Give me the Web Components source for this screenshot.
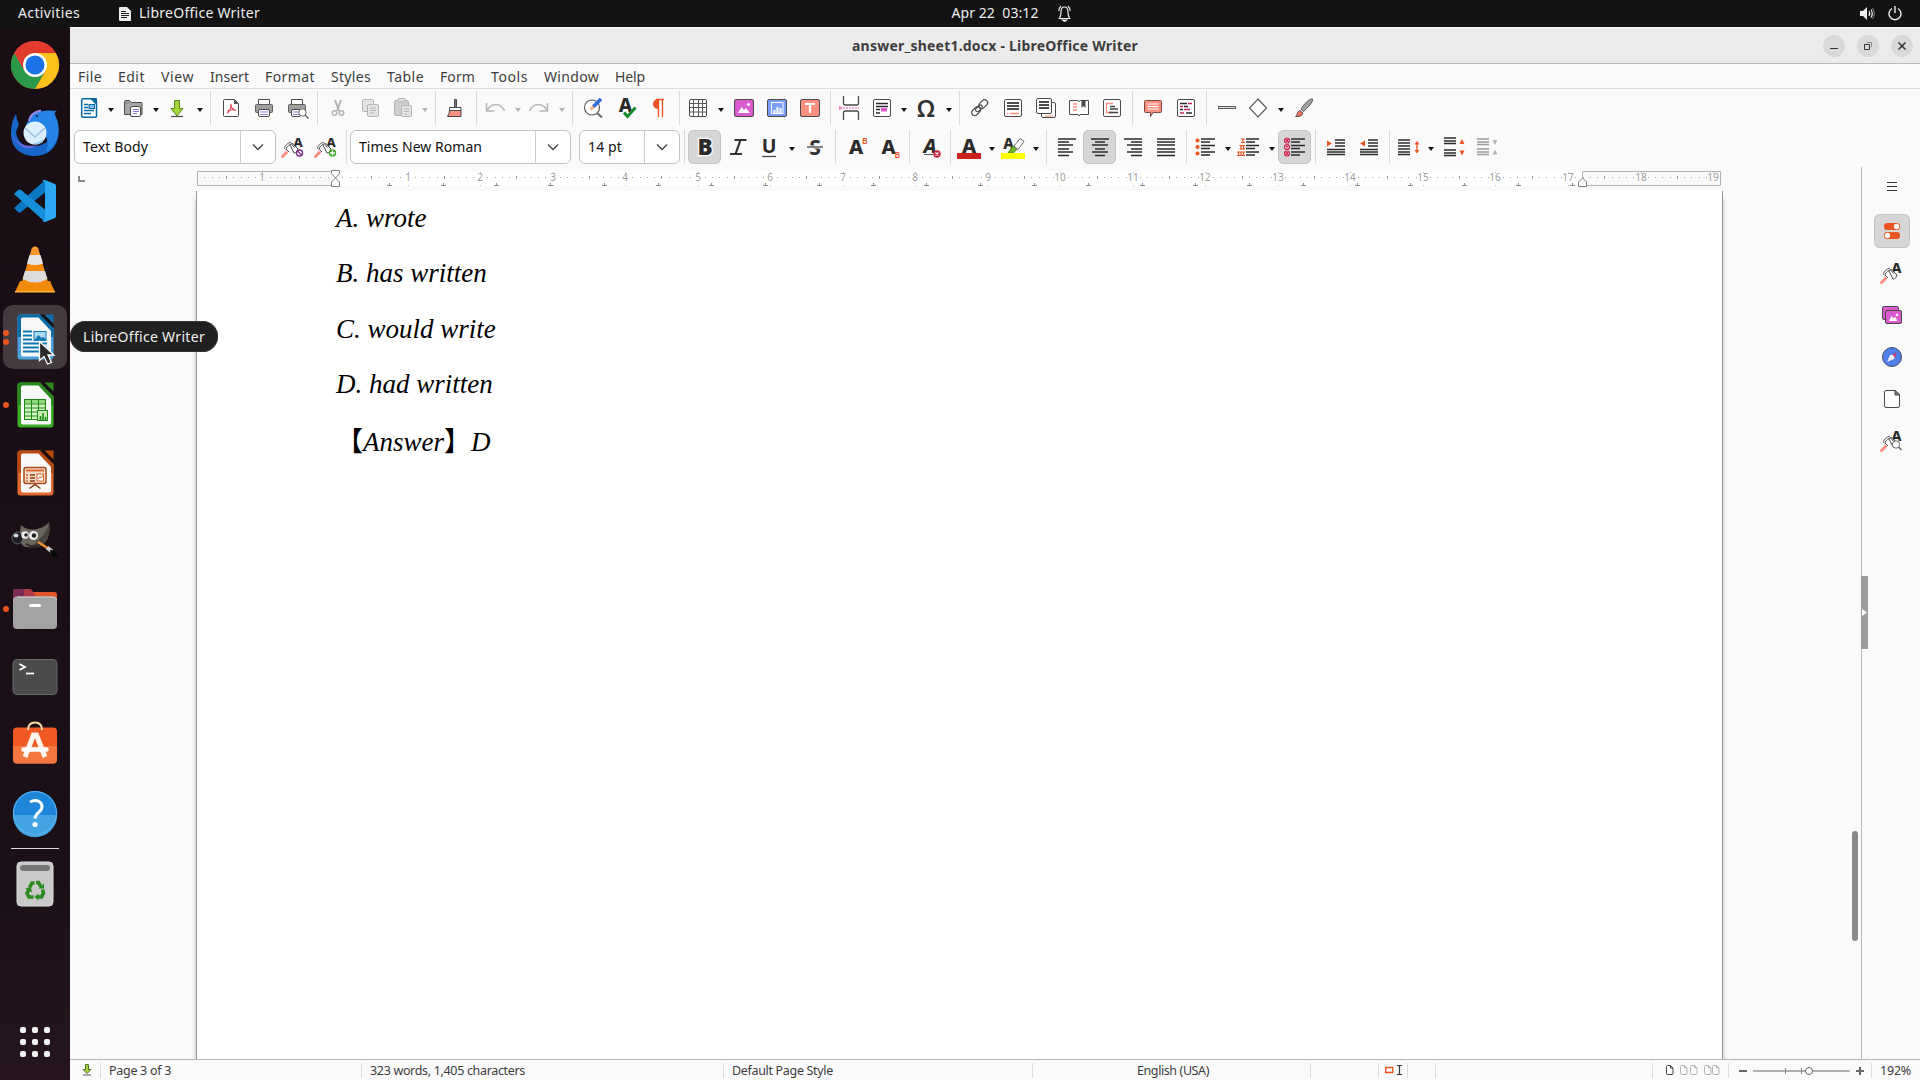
<!DOCTYPE html>
<html lang="en">
<head>
<meta charset="utf-8">
<title>answer_sheet1.docx - LibreOffice Writer</title>
<style>
  html, body { margin: 0; height: 100%; overflow: hidden; }
  body { font: 14px/20px "Noto Sans", sans-serif; color: #3d3d3d; background: #fafafa; }
</style>
</head>
<body>
<desktop-shell></desktop-shell>

<script>
const A = (x, y, size, fill = "#2b2b2b") =>
  `<text x="${x}" y="${y}" font-family="Noto Sans" font-weight="800" font-size="${size}" text-anchor="middle" fill="${fill}">A</text>`;
const B = (x, y) =>
  `<text x="${x}" y="${y}" font-family="Noto Sans" font-size="8.5" font-weight="600" fill="#e95420">B</text>`;
const lines = (list, color = "#2b2b2b", width = 1.5) =>
  `<path d="${list.map(([x, y, w]) => `M${x} ${y}h${w}`).join("")}" stroke="${color}" stroke-width="${width}" fill="none"/>`;
const page = (x, y, w, h, fill = "#fff", stroke = "#4a4a4a") =>
  `<rect x="${x}" y="${y}" width="${w}" height="${h}" rx="1.5" fill="${fill}" stroke="${stroke}"/>`;
const styleBrush = `
  <path d="M1.500 21.500l4-4" stroke="#fb9080" stroke-width="3" stroke-linecap="round"/>
  <path d="M3.500 13.500c0-3 4-6 6-6l4 5M5 14.500c0-2 2-4 4-5M5 14l3 3M9 10c2-2 3-2 4 0l4 4c-1 3-2 4-4 4z" fill="#fff" stroke="#4a4a4a"/>`;

// 24 x 24 glyphs for the toolbars and the sidebar
const ICONS = {
  new: `<path d="M6 2.800h9.500l4 4V20a1.300 1.300 0 0 1-1.300 1.300H6A1.300 1.300 0 0 1 4.700 20V4A1.300 1.300 0 0 1 6 2.800z" fill="#fff" stroke="#0369a3" stroke-width="1.500"/>
    <path d="M12.500 2H19q1 0 1 1v6.500z" fill="#0369a3"/>
    ${lines([[7, 8.500, 4], [7, 11.500, 4], [7, 14.500, 10], [7, 17.500, 7]], "#0369a3", 1.300)}
    <rect x="12" y="8.500" width="5.500" height="4" fill="#83beea" stroke="#0369a3"/>`,
  open: `<path d="M3.500 18.500v-13q0-1 1-1h4l2 2h9.500q1 0 1 1v11z" fill="#a7a7a7" stroke="#4a4a4a"/>
    <path d="M3.500 7h4l2-1.500" stroke="#777" fill="none"/>
    ${page(9.500, 10.500, 10, 10)}${lines([[12, 13.500, 6], [12, 15.500, 6], [12, 17.500, 4]], "#8a83d8", 1)}`,
  save: `<path d="M9.500 4.500h5v8H18l-6 7.500-6-7.500h3.500z" fill="#a3d63a" stroke="#58881a"/>${lines([[6, 20.500, 12]], "#4a4a4a", 1.200)}`,
  pdf: `<path d="M6 3.500h9.500l4 4V19.500a1 1 0 0 1-1 1H5.500a1 1 0 0 1-1-1v-15a1 1 0 0 1 1-1z" fill="#fff" stroke="#4a4a4a"/>
    <path d="M15 3.500v4.500h4.500z" fill="#555"/>
    <path d="M11.500 8c2 1-1 8-3.500 9M11.500 9c1 3 3 5 5.500 5.500M8.500 15c2-1 5-1.500 8-1" stroke="#e8344f" fill="none" stroke-width="1.100"/>`,
  print: `<path d="M6.500 9v-5.500h11V9" fill="#fff" stroke="#4a4a4a"/>
    <rect x="3.500" y="8.500" width="17" height="8" rx="1" fill="#a0a0a0" stroke="#5e5e5e"/>
    ${page(6.500, 13.500, 11, 7)}${lines([[8, 16, 8], [8, 18.500, 8]], "#8a83d8", 1)}`,
  preview: `<path d="M6.500 9v-5.500h11V9" fill="#fff" stroke="#4a4a4a"/>
    <rect x="3.500" y="8.500" width="17" height="8" rx="1" fill="#a0a0a0" stroke="#5e5e5e"/>
    ${page(6.500, 13.500, 9, 7)}${lines([[8, 16, 7], [8, 18.500, 6]], "#8a83d8", 1)}
    <circle cx="17.500" cy="16.500" r="3.700" fill="#fff" stroke="#6a6a6a"/><path d="M20 19l3.500 3.500" stroke="#6a6a6a" stroke-width="1.600"/>`,
  cut: `<g transform="translate(1)"><path d="M9 4l4 11M15 4l-4 11" stroke="#b5b5b5" stroke-width="2"/>
    <circle cx="8.500" cy="17" r="2.300" fill="none" stroke="#b5b5b5" stroke-width="1.500"/><circle cx="15.500" cy="17" r="2.300" fill="none" stroke="#b5b5b5" stroke-width="1.500"/></g>`,
  copy: `<g transform="translate(1)">${page(3.500, 3.500, 11, 12, "#e4e4e4", "#b5b5b5")}${page(8.500, 8.500, 11, 12, "#e4e4e4", "#b5b5b5")}
    ${lines([[11, 12, 6], [11, 14.500, 6], [11, 17, 4]], "#b5b5b5", 1)}</g>`,
  paste: `<g transform="translate(1)"><rect x="2.500" y="4.500" width="14" height="15" rx="1.500" fill="#cfcfcf" stroke="#b5b5b5"/><rect x="6" y="2.500" width="7" height="3.500" rx="1" fill="#ddd" stroke="#b5b5b5"/>
    ${page(9.500, 9.500, 10, 11, "#e4e4e4", "#b5b5b5")}${lines([[12, 13, 5], [12, 15.500, 5], [12, 18, 3]], "#b5b5b5", 1)}</g>`,
  clone: `<path d="M11.500 3.500h2v8h-2z" fill="#777" stroke="#4a4a4a"/><path d="M6.500 11.500h11.500v3H6.500z" fill="#fff" stroke="#4a4a4a"/>
    <path d="M6.500 14.500H18v6H4.500q2-2.500 2-6z" fill="#fb9080" stroke="#4a4a4a"/>`,
  undo: `<path d="M3.500 7v8h8M4 14.500C8 7 17 6 21.500 15" fill="none" stroke="#b9b9b9" stroke-width="1.600"/>`,
  redo: `<path d="M20.500 7v8h-8M20 14.500C16 7 7 6 2.500 15" fill="none" stroke="#b9b9b9" stroke-width="1.600"/>`,
  find: `<circle cx="11" cy="11.500" r="7.500" fill="#fff" stroke="#5a5a5a" stroke-width="1.200"/><path d="M16 17l5 4.500" stroke="#6a6a6a" stroke-width="2"/>
    <path d="M12 11l8-8" stroke="#2e6be0" stroke-width="3.500"/><path d="M9.500 13.500l3-3" stroke="#f3b37e" stroke-width="3"/>`,
  spell: `<g transform="translate(1)">${A(10.500, 16, 19)}<path d="M9 16.500l3.500 4 8-9" fill="none" stroke="#178a2c" stroke-width="3"/></g>`,
  pilcrow: `<g transform="translate(-2)"><path d="M13.500 3v18M17.500 3v18M11 3.500h8" stroke="#e95420" stroke-width="1.300"/><path d="M13 3a4.700 4.700 0 0 0 0 10z" fill="#e95420"/></g>`,
  table: `${page(3.500, 3.500, 17, 17)}<path d="M7.500 3.500v17M12.500 3.500v17M16.500 3.500v17M3.500 7.500h17M3.500 11.500h17M3.500 16h17" stroke="#5a5a5a"/>`,
  image: `${page(2.500, 3.500, 19, 17, "#dc5bcf")}<path d="M6 17l3.500-6 2.500 3 2-2 4 5z" fill="#fff"/><circle cx="16.500" cy="8.500" r="1.500" fill="#fff"/>`,
  chart: `${page(2.500, 3.500, 19, 17, "#7a9df5")}<path d="M6.500 6v11.500H18M6.500 6.500H18v11" fill="none" stroke="#fff"/><path d="M9.500 17v-3M12.500 17v-6M15.500 17v-5" stroke="#fff" stroke-width="2"/>`,
  textbox: `${page(2.500, 3.500, 19, 17, "#fb9080")}<path d="M7 8h10M12 8v9" stroke="#fff" stroke-width="2.200"/>`,
  pagebreak: `<g transform="translate(2)"><path d="M4.500 0v7q0 2 2 2h11q2 0 2-2V0M4.500 24v-7q0-2 2-2h11q2 0 2 2v7" fill="#fff" stroke="#4a4a4a" stroke-width="1.300"/>
    <path d="M4 12h16" stroke="#e65bbd" stroke-dasharray="2 1"/><path d="M0 9.500l4 2.500-4 2.500z" fill="#f08bc9"/></g>`,
  field: `${page(3.500, 3.500, 17, 17)}${lines([[6, 7.500, 12], [6, 10.500, 12], [6, 13.500, 4], [6, 17, 4]], "#2b2b2b", 1.300)}<path d="M11 12h6v3.500h-6z" fill="#dc5bcf"/>`,
  omega: `<text x="12" y="20.500" font-family="Noto Sans" font-weight="600" font-size="24" text-anchor="middle" fill="#333">Ω</text>`,
  link: `<g fill="none" stroke="#4a4a4a" stroke-width="1.200" transform="rotate(-45 12 12)"><rect x="2" y="8.500" width="10" height="6" rx="3"/><rect x="7" y="9.500" width="8" height="4" rx="2"/><rect x="12" y="8.500" width="10" height="6" rx="3"/></g>`,
  footnote: `${page(3.500, 3.500, 17, 17)}${lines([[6, 7, 12], [6, 10, 12], [6, 13, 12]], "#111")}${lines([[6, 17.500, 1.500], [9, 17.500, 9]], "#fb9080", 1.300)}`,
  endnote: `${page(7.500, 6.500, 14, 15)}${page(2.500, 2.500, 15, 15)}${lines([[5, 6, 10], [5, 9, 10], [5, 12, 10]], "#111")}${lines([[11, 20, 8]], "#fb9080", 1)}`,
  bookmark: `<path d="M2.500 4.500h8l1.500 1 1.500-1h8v14H13l-1 1.500-1-1.500H2.500z" fill="#fff" stroke="#4a4a4a"/><path d="M14.500 4h4v8l-2-2-2 2z" fill="#4a4a4a"/>
    ${lines([[6, 8, 4], [6, 11, 4], [6, 14, 4]], "#fb9080")}`,
  crossref: `${page(3.500, 3.500, 17, 17)}<path d="M13 7.500H6.500v9H13" fill="none" stroke="#fb9080" stroke-width="1.300"/>${lines([[10, 10.500, 5], [10, 13, 8], [9, 16.500, 9]], "#444", 1.300)}`,
  comment: `<path d="M4.500 4.500h15q1 0 1 1v10q0 1-1 1H12l-2.500 4v-4h-5q-1 0-1-1v-10q0-1 1-1z" fill="#fb9080" stroke="#7a4a42"/>${lines([[6.500, 8, 11], [6.500, 10.500, 11], [6.500, 13, 11]], "#fff", 1.200)}`,
  track: `${page(3.500, 3.500, 17, 17)}${lines([[6, 7.500, 7], [10, 10.500, 4], [6, 13.500, 3], [12, 17, 6]], "#2b2b2b")}${lines([[14, 7.500, 4], [6, 10.500, 3], [10, 13.500, 6], [6, 17, 4]], "#d0224f")}`,
  line: `<rect x="4.500" y="10.500" width="17" height="2" fill="#ddd" stroke="#5a5a5a"/>`,
  shape: `<path d="M12 3l8.500 9-8.500 9-8.500-9z" fill="#fff" stroke="#5a5a5a" stroke-width="1.200"/>`,
  brush: `<g transform="translate(1)"><path d="M9 13C12 8 18 2 20.500 3c1 3-5 9-9 12.500z" fill="#a0a0a0" stroke="#5a5a5a"/><path d="M3.500 20.500c2-1 1-5 4.500-6l3 2.500c-1 3-4 4-7.500 3.500z" fill="#f07060" stroke="#555"/></g>`,

  styleUpdate: `${A(17, 12, 13)}${styleBrush}<circle cx="18.500" cy="18" r="3" fill="#fff" stroke="#7b2a83" stroke-width="1.400"/><path d="M16.500 16l4 4" stroke="#7b2a83" stroke-width="1.200"/>`,
  styleNew: `${A(17, 12, 13)}${styleBrush}<circle cx="18.500" cy="18" r="3.700" fill="#43a62c"/><path d="M18.500 15.500v5M16 18h5" stroke="#fff" stroke-width="1.300"/>`,
  styles: `${A(16.500, 12, 14)}${styleBrush}`,
  inspector: `${A(16.500, 12, 14)}${styleBrush}<circle cx="16" cy="15.500" r="3.700" fill="#fff" stroke="#6a6a6a"/><path d="M18.500 18l3 3" stroke="#6a6a6a" stroke-width="1.500"/>`,
  bold: `<text x="12" y="20" font-family="Noto Sans" font-weight="900" font-size="22.500" text-anchor="middle" fill="#2b2b2b" stroke="#fff" stroke-width="2.500" paint-order="stroke">B</text>`,
  italic: `<path d="M8.500 5h12M4 19h12M14.500 5L9.500 19" stroke="#333" stroke-width="2.200"/>`,
  underline: `<text x="12" y="18" font-family="Noto Sans" font-weight="700" font-size="19.500" text-anchor="middle" fill="#2b2b2b">U</text>${lines([[5, 21.500, 14]], "#444", 1.200)}`,
  strike: `<text x="12" y="19.500" font-family="Noto Sans" font-weight="700" font-size="21" text-anchor="middle" fill="#333">S</text>${lines([[4, 12, 16]], "#fafafa", 3)}${lines([[4, 12, 16]], "#444", 1.300)}`,
  superscript: `${A(11, 19, 20)}${B(17, 9)}`,
  subscript: `${A(10.500, 19, 20)}${B(16.500, 23)}`,
  clear: `<text x="11" y="18" font-family="Noto Sans" font-weight="800" font-style="italic" font-size="20" text-anchor="middle" fill="#2b2b2b">A</text>${lines([[5, 19.500, 9]], "#555", 1)}
    <circle cx="18" cy="19" r="3.700" fill="#c9243f"/><path d="M16.500 17.500l3 3M19.500 17.500l-3 3" stroke="#fff" stroke-width="1.200"/>`,
  fontcolor: `${A(12, 18, 20)}<path d="M0 18h24v6H0z" fill="#c9211e"/>`,
  highlight: `${A(7.500, 14, 15)}<path d="M13 11l6-7.500 4 3-6 8z" fill="#fff" stroke="#6a6a6a"/><path d="M7 18l5-7 4 3.500-4 3.500z" fill="#6fb52c" stroke="#4d8b1b"/><path d="M0 18h24v6H0z" fill="#ff0"/>`,
  left: lines([[3, 4, 18], [3, 7, 11], [3, 10, 15], [3, 14, 11], [3, 17, 15], [3, 20.500, 11]]),
  center: lines([[3, 4, 18], [7, 7, 10], [4, 10, 16], [7, 14, 10], [4, 17, 16], [7, 20.500, 10]]),
  right: lines([[3, 4, 18], [10, 7, 11], [6, 10, 15], [10, 14, 11], [6, 17, 15], [10, 20.500, 11]]),
  justify: lines([[3, 4, 18], [3, 7, 18], [3, 10, 18], [3, 14, 18], [3, 17, 18], [3, 20.500, 18]]),
  bullets: `${lines([[8, 4, 14], [8, 7, 9], [8, 10.500, 14], [8, 13.500, 9], [8, 17, 14], [8, 20, 9]])}<g fill="#e95420"><circle cx="4.500" cy="5.500" r="2"/><circle cx="4.500" cy="12" r="2"/><circle cx="4.500" cy="18.500" r="2"/></g>`,
  numbering: `${lines([[9, 4, 13], [9, 7, 9], [9, 10.500, 13], [9, 13.500, 9], [9, 17, 13], [9, 20, 9]])}
    <path d="M4 4h4M4 7.500h4M6 4v3.500M2.500 10.500H8M2.500 14H8M4 10.500V14M6.500 10.500V14M0 17h8M0 20.500h8M1.500 17v3.500M4 17v3.500M6.500 17v3.500" stroke="#e95420" stroke-width="1.200"/>`,
  nolist: `${lines([[8, 4, 14], [8, 7, 9], [8, 10.500, 14], [8, 13.500, 9], [8, 17, 14], [8, 20, 9]])}
    <g fill="#fff" stroke="#d0224f" stroke-width="1.200">${[5.500, 12, 18.500].map(y => `<circle cx="4" cy="${y}" r="2.500"/><path d="M2.500 ${y - 1.500}l3 3m0-3l-3 3"/>`).join("")}</g>`,
  indent: `${lines([[11, 5, 10], [11, 8, 10], [11, 11, 10], [3, 14.500, 18], [3, 17, 18], [3, 19.500, 18]])}<path d="M3 5.500l5 3-5 3z" fill="#e95420"/>`,
  outdent: `${lines([[11, 5, 10], [11, 8, 10], [11, 11, 10], [3, 14.500, 18], [3, 17, 18], [3, 19.500, 18]])}<path d="M8 5.500l-5 3 5 3z" fill="#e95420"/>`,
  spacing: `${lines([[2, 5, 12], [2, 8, 12], [2, 11, 12], [2, 14, 12], [2, 17, 12], [2, 19.500, 12]])}<path d="M21 8v8" stroke="#e95420" stroke-width="1.300"/><path d="M18.500 9.500L21 6l2.500 3.500zM18.500 15L21 18.500l2.500-3.500z" fill="#e95420"/>`,
  paraInc: `${lines([[2, 3, 12], [2, 6, 12], [2, 8.500, 12], [2, 15, 12], [2, 18, 12], [2, 20.500, 12]])}<path d="M17.500 9l2.500-5 2.500 5zM17.500 15.500l2.500 5 2.500-5z" fill="#e95420"/>`,
  paraDec: `${lines([[2, 4, 12], [2, 7, 12], [2, 9.500, 12], [2, 14, 12], [2, 17, 12], [2, 19.500, 12]], "#9c9c9c")}<path d="M17.500 5l2.500 5 2.500-5zM17.500 19.500l2.500-5 2.500 5z" fill="#b5b5b5"/>`,

  menu: lines([[7, 8.500, 10], [7, 12.500, 10], [7, 16.500, 10]], "#333", 1),
  properties: `<rect x="4" y="4" width="16" height="7" rx="3" fill="#e95420"/><circle cx="16.500" cy="7.500" r="2.700" fill="#fff"/><rect x="4" y="13" width="16" height="7" rx="3" fill="#e95420"/><circle cx="7.500" cy="16.500" r="2.700" fill="#fff"/>`,
  gallery: `${page(2.500, 3.500, 16, 13, "#dc5bcf")}${page(5.500, 7.500, 16, 13, "#dc5bcf")}<path d="M9 18l2.500-5 2 2.500 1.500-2 2.500 4.500z" fill="#fff"/><circle cx="17" cy="12" r="1.200" fill="#fff"/>`,
  navigator: `<circle cx="12" cy="12" r="9.500" fill="#4f7fe8" stroke="#3e4f6c"/><path d="M17 7l-3 7-3-3z" fill="#e8344f"/><path d="M7 17l3-7c4-1 5 3 4 4z" fill="#eef"/>`,
  page: `<path d="M6 3.500h9.500l4 4V19q0 1.500-1.500 1.500H6q-1.500 0-1.500-1.500V5q0-1.500 1.500-1.500z" fill="#fff" stroke="#4a4a4a"/><path d="M15 3.500v4.500h4.500z" fill="#777" stroke="#4a4a4a"/>`,
};

const officeDoc = (dark, light, art) => `
  <path d="M9.500 1.500h20L42.500 15v28.500q0 3-3 3H9.500q-3 0-3-3v-39q0-3 3-3z" fill="${light}"/>
  <path d="M9.500 1.500h20L42.500 15v9h-36V4.500q0-3 3-3z" fill="${dark}"/>
  <path d="M11 4.500h16.500L40 18v23.500q0 2-2 2H12q-2 0-2-2V6.500q0-2 2-2z" fill="#f8f8f8"/>
  <path d="M29 1.500h4l9.500 9.500v4z" fill="#1a0f15"/>
  <path d="M33.500 1.500h9V10.500z" fill="${dark}"/>${art}`;

// 48 x 48 launcher pictures
const APPS = {
  chrome: `<circle cx="24" cy="24" r="24" fill="#e33b2e"/>
    <path d="M24 24L3.200 12A24 24 0 0 0 24 48l10.500-18z" fill="#2b9a48"/>
    <path d="M24 12h20.800A24 24 0 0 1 24 48l10.500-18z" fill="#fcc21b"/>
    <path d="M24 12h20.800A24 24 0 0 0 3.200 12l10.400 18z" fill="#e33b2e"/>
    <circle cx="24" cy="24" r="12" fill="#fff"/><circle cx="24" cy="24" r="9.500" fill="#1a73e8"/>`,
  thunderbird: `<path d="M5 5c1 4 1 7 3 10l-3 8C6 33 14 40 27 37c10-3 17-9 20-20 3 16-6 30-23 30C8 47 0 37 0 25 0 16 2 10 5 5z" fill="#1667c9"/>
    <path d="M18 12C21 4 30 0 46 2c-2 1-3 2-2 4 7 13 4 29-9 37 4-10 0-17-5-23-3-3-8-3-13-1-3-3-2-5 1-7z" fill="#2384e6"/>
    <path d="M0 23c5 11 12 16 27 13-10 7-22 2-27-13z" fill="#6f67dd"/>
    <circle cx="24" cy="24" r="11.500" fill="#dcefff"/><path d="M14 19l10 9 10-9" fill="none" stroke="#9dbfe0" stroke-width="1.500"/>
    <path d="M22 34q7 0 11-5-3 9-11 5z" fill="#90c6f5"/><circle cx="26" cy="7" r="1.300" fill="#0c3666"/>
    <path d="M18 12c1-6 5-9 12-10.500" stroke="#9b8ef0" stroke-width="2" fill="none"/>`,
  vscode: `<path d="M34 3L3 31l4 4q2 1 3 0L37 13z" fill="#0a78c2"/><path d="M34 45L3 17l4-4q2-1 3 0L37 35z" fill="#168fd8"/>
    <path d="M34 3l10 4q1 1 1 2v30q0 1-1 2l-10 4q-1 0-3-1 3 0 3-3V7q0-3-3-3 1-1 3-1z" fill="#2aa8f4"/>`,
  vlc: `<path d="M9 36h30l5 11H4z" fill="#f08a0a"/><path d="M4 46h40v1.500H4z" fill="#ffb83a"/>
    <path d="M21 3q3-3 6 0l10 34q-13 8-26 0z" fill="#f58a0c"/>
    <path d="M18.500 10h11l2.500 8.500q-8 3-16 0z" fill="#e5e5e5"/><path d="M14 26h20l2.500 8q-12 7-25 0z" fill="#dcdcdc"/>
    <path d="M21 3q3-3 6 0l2 7H19z" fill="#f9962a"/>`,
  writer: officeDoc("#0b6ca8", "#4aa3dc", `
    <path d="M12 18.500h9M12 22.500h9M12 26.500h9M12 30.500h24M12 34.500h24M12 38.500h24" stroke="#0f77b4" stroke-width="2"/>
    <rect x="23" y="18.500" width="12" height="9" fill="#a8d7f4" stroke="#0f77b4"/><path d="M23.500 27l4-5 3 3 2-1 3 3z" fill="#0f77b4"/>`),
  calc: officeDoc("#2a8a1f", "#3cae27", `
    <rect x="13.500" y="18.500" width="21" height="20" fill="#d2f3c4" stroke="#1e8a13"/><path d="M14 19h20v3.500H14z" fill="#8ed77a"/>
    <path d="M13 23h21M13 27h21M13 31h21M13 35h21M20.500 18v20M27.500 18v20" stroke="#1e8a13"/>
    <rect x="26.500" y="29.500" width="10" height="10" fill="#c3edb3" stroke="#1e8a13"/><path d="M29.500 39v-4M32 39v-7M34.500 39v-3" stroke="#1e8a13" stroke-width="1.600"/>`),
  impress: officeDoc("#b84a10", "#e0692f", `
    <rect x="13" y="18.500" width="22" height="16" rx="2" fill="#f5dccb" stroke="#a9481a" stroke-width="1.500"/><path d="M15 21.500h18" stroke="#d8682e" stroke-width="2"/>
    <path d="M15 26h2M15 29h2M15 32h2" stroke="#d8682e" stroke-width="1.500"/><path d="M19 26h5M19 29h5M19 32h5" stroke="#8a3a12" stroke-width="1.500"/>
    <rect x="26" y="25" width="6.500" height="7" fill="#fff" stroke="#d8682e"/><path d="M27 30l2-2 1 1 2-3" stroke="#d8682e" fill="none"/>
    <path d="M18.500 39.500l5.500-4 5.500 4" fill="none" stroke="#8a3a12" stroke-width="1.500"/>`),
  gimp: `<g transform="translate(1 3)"><path d="M9 5q6 6 16 4 9-2 12-7 2 14-4 20-7 6-18 5Q5 27 9 5z" fill="#6b665d"/><path d="M37 2q-1 8-7 14-6 8-13 11 10 2 16-4 6-8 4-21z" fill="#48443d"/>
    <ellipse cx="5.500" cy="18" rx="5.500" ry="6" fill="#1d1f24" stroke="#777" stroke-width=".7"/><ellipse cx="4" cy="15.500" rx="2.500" ry="2" fill="#ccd2d8"/>
    <circle cx="13" cy="15" r="3.700" fill="#eee"/><circle cx="14" cy="15" r="1.800" fill="#222"/><circle cx="21.500" cy="15.500" r="4.500" fill="#eee"/><circle cx="22" cy="15.500" r="2.300" fill="#222"/>
    <path d="M14 24q8 5 14 0" fill="none" stroke="#2a2724" stroke-width="2"/><path d="M26 22l11 7" stroke="#e8902c" stroke-width="2.500"/><path d="M35 27.500l5 4" stroke="#ccc" stroke-width="4"/><path d="M38 30q7-1 8 8-8-1-8-8z" fill="#080808"/></g>`,
  files: `<g transform="translate(0 1)"><path d="M2 14V6q0-3 3-3h14q2 0 3 3h21q3 0 3 3v6z" fill="#b13a48"/><path d="M22 6h21q3 0 3 3v6H28z" fill="#e0562a"/><path d="M2 14V6q0-3 3-3h8v11z" fill="#7c2a56"/>
    <rect x="2" y="10.500" width="44" height="32.500" rx="4" fill="#a3a3a3"/><path d="M6 11h36q3.500 0 3.500 3" stroke="#d0d0d0" fill="none"/><path d="M19.500 19.500h9" stroke="#fff" stroke-width="3" stroke-linecap="round"/></g>`,
  terminal: `<g transform="translate(0 1)"><rect x="2" y="5.500" width="44" height="35" rx="4" fill="#4b4b4b" stroke="#686868"/><path d="M8.500 10l5.500 3-5.500 3" fill="none" stroke="#fff" stroke-width="1.800"/><path d="M15 19.500h8" stroke="#fff" stroke-width="1.800"/></g>`,
  software: `<rect x="2" y="6.500" width="44" height="36" rx="4" fill="#f05a22"/><path d="M2 25h44v13.500q0 4-4 4H6q-4 0-4-4z" fill="#f3773f"/>
    <path d="M17 9q0-7.500 7-7.500t7 7.500" fill="none" stroke="#f5dca8" stroke-width="2"/>
    <path d="M14 36l8.500-22h3L34 36" fill="none" stroke="#fff3ee" stroke-width="5"/><path d="M12.500 28.500h23" stroke="#fff" stroke-width="4.500" stroke-linecap="round"/>`,
  help: `<circle cx="24" cy="24" r="22.200" fill="#1e86d8"/><path d="M1.800 26a22.200 22.200 0 0 0 44.400 0z" fill="#43a3e3"/><circle cx="24" cy="24" r="21.500" fill="none" stroke="#5eb6ef"/>
    <path d="M19 13c6-3 12-1 12 5 0 5-7 6-7 11.500" fill="none" stroke="#fff" stroke-width="3"/><circle cx="24" cy="35.500" r="2.600" fill="#fff"/>`,
  trash: `<rect x="6" y="2" width="36" height="44" rx="4" fill="#c9c9c9" stroke="#dedede"/><rect x="9" y="5" width="30" height="6" rx="3" fill="#757575"/>
    <g fill="none" stroke="#2a8a1f" stroke-width="3.600"><path d="M18.500 27.500l2.500-4.500h2.500M25 22.500h2.500l2.500 4.500"/><path d="M31.500 29.500l1 3.500-2 4H26"/><path d="M22.500 37H18l-2-3.500 2-4.500"/></g>
    <path d="M27.500 28.500l5.500 0 0-5zM27.500 33.500v7l-4-3.500zM14 28.500l6-1.500 1 5.500z" fill="#2a8a1f"/>`,
  grid: [12, 24, 36].map(y => [12, 24, 36].map(x => `<rect x="${x - 3}" y="${y - 3}" width="6" height="6" rx="2" fill="#f2f2f2"/>`).join("")).join(""),
};

class UiElement extends HTMLElement {
  constructor() {
    super();
    this.attachShadow({ mode: "open" });
  }

  connectedCallback() {
    this.shadowRoot.innerHTML = `<style>${this.constructor.styles}</style>${this.markup()}`;
    this.ready();
  }

  ready() {}
}

// A one-line label spaced out to an exact width
class FitText extends UiElement {
  static get styles() {
    return `:host { display: block; white-space: pre; flex: none; } span { display: inline-block; }`;
  }
  markup() { return `<span><slot></slot></span>`; }
  ready() {
    const width = Number(this.getAttribute("w"));
    const span = this.shadowRoot.querySelector("span");
    const natural = span.getBoundingClientRect().width;
    span.style.letterSpacing = `${(width - natural) / this.textContent.length}px`;
    this.style.width = `${width}px`;
  }
}

class ToolIcon extends UiElement {
  static get styles() {
    return `
      :host { display: flex; flex: none; align-items: center; box-sizing: border-box; height: 34px; }
      :host([active]) { background: #d6d6d6; border-radius: 6px; box-shadow: inset 0 0 0 1px #c4c4c4; }
      svg { display: block; overflow: visible; margin: 0 calc(-1 * var(--nudge, 0px)) 0 var(--nudge, 0px); }`;
  }
  markup() {
    const w = Number(this.getAttribute("w") || 33);
    return `<svg width="${w}" height="24" viewBox="${-Math.floor((w - 24) / 2)} 0 ${w} 24" fill="none">${ICONS[this.getAttribute("name")]}</svg>`;
  }
}

class ToolCaret extends UiElement {
  static get styles() {
    return `
      :host { display: flex; flex: none; justify-content: center; align-items: center; height: 34px; color: #111; }
      :host([off]) { color: #b5b5b5; }
      i { border: 3.500px solid transparent; border-top: 4px solid currentColor; border-bottom: 0; margin-top: 4px; }`;
  }
  markup() { return `<i></i>`; }
  ready() { this.style.width = `${this.getAttribute("w") || 13}px`; }
}

class ToolSep extends UiElement {
  static get styles() {
    return `:host { display: block; flex: none; box-sizing: border-box; height: 34px; } i { display: block; width: 1px; height: 100%; background: #dadada; }`;
  }
  markup() { return `<i></i>`; }
  ready() {
    this.style.width = `${this.getAttribute("w")}px`;
    this.style.paddingLeft = `${this.getAttribute("lead") || 4}px`;
  }
}

class ComboField extends UiElement {
  static get styles() {
    return `
      :host { display: flex; flex: none; box-sizing: border-box; height: 34px; border: 1px solid #c2c2c2; border-radius: 6px; background: #fff; color: #111; align-items: center; }
      .value { flex: 1; padding-left: 8px; }
      .drop { width: 34px; align-self: stretch; border-left: 1px solid #cdcdcd; display: flex; align-items: center; justify-content: center; }`;
  }
  markup() {
    return `<div class="value"><slot></slot></div><div class="drop"><svg width="12" height="8" fill="none" stroke="#444" stroke-width="1.300"><path d="M1 1.500l5 5 5-5"/></svg></div>`;
  }
  ready() { this.style.width = `${this.getAttribute("w")}px`; }
}

class TopPanel extends UiElement {
  static get styles() {
    return `
      :host { display: grid; grid-template-columns: 1fr auto 1fr; align-items: center; height: 27px; box-sizing: border-box; background: #131313; color: #ececec; font-size: 14px; }
      div { display: flex; align-items: center; }
      fit-text { margin-bottom: 1px; }
      .start { padding-left: 18px; }
      .start svg { margin: 0 8px 0 39px; }
      .clock { margin-left: 102px; }
      .clock svg { margin-left: 19px; }
      .end { justify-content: flex-end; gap: 13px; padding-right: 18px; }`;
  }
  markup() {
    return `
      <div class="start"><fit-text w="62">Activities</fit-text>
        <svg width="12" height="14"><path d="M1 0h7l4 4v9q0 1-1 1H1q-1 0-1-1V1q0-1 1-1z" fill="#eee"/><path d="M2 4.500h5M2 6.500h8M2 8.500h8M2 10.500h6" stroke="#222"/></svg>
        <fit-text w="121">LibreOffice Writer</fit-text></div>
      <div class="clock"><fit-text w="87">Apr 22  03:12</fit-text>
        <svg width="13" height="17" fill="none" stroke="#eee" stroke-width="1.200"><path d="M.5 13.500h12M1.500 13Q3 11 3 7q0-5 3.500-5T10 7q0 4 1.500 6M.8 6Q1 3 3 1M12.200 6Q12 3 10 1"/><path d="M4.500 15h4l-2 1.500z" fill="#eee"/></svg></div>
      <div class="end">
        <svg width="15" height="15" fill="none" stroke="#eee"><path d="M0 5h3l4-4v13L3 10H0z" fill="#eee" stroke="none"/><path d="M9 5q1.500 2.500 0 5M11 3.500q2.500 4 0 8" stroke-width="1.200"/><path d="M12.500 2q3.500 5.500 0 11" stroke="#888"/></svg>
        <svg width="14" height="15" fill="none" stroke="#eee" stroke-width="1.400"><path d="M7 0v7M4 2.500a6 6 0 1 0 6 0"/></svg></div>`;
  }
}

class DockItem extends UiElement {
  static get styles() {
    return `
      :host { display: flex; flex: none; align-items: center; justify-content: center; width: 64px; height: 64px; border-radius: 10px; position: relative; }
      :host([active]) { background: #433b40; }
      svg { display: block; overflow: visible; }
      .dots { position: absolute; left: 0; top: 0; bottom: 0; display: flex; flex-direction: column; justify-content: center; gap: 3px; }
      .dots i { width: 6px; height: 6px; border-radius: 3px; background: #e95420; }`;
  }
  markup() {
    const dots = "<i></i>".repeat(Number(this.getAttribute("open") || 0));
    return `<svg width="48" height="48" viewBox="0 0 48 48">${APPS[this.getAttribute("app")]}</svg><div class="dots">${dots}</div>`;
  }
}

class AppDock extends UiElement {
  static get styles() {
    return `
      :host { display: flex; flex-direction: column; align-items: center; gap: 4px; width: 70px; box-sizing: border-box; padding: 6px 0; background: linear-gradient(#180e14, #1b1017 80%, #26151e); }
      hr { width: 48px; height: 1px; margin: -1px 0; border: 0; background: #dcdcdc; flex: none; }
      .apps { margin-top: auto; }`;
  }
  markup() {
    return `
      <dock-item app="chrome"></dock-item><dock-item app="thunderbird"></dock-item><dock-item app="vscode"></dock-item>
      <dock-item app="vlc"></dock-item><dock-item app="writer" open="2" active></dock-item><dock-item app="calc" open="1"></dock-item>
      <dock-item app="impress"></dock-item><dock-item app="gimp"></dock-item><dock-item app="files" open="1"></dock-item>
      <dock-item app="terminal"></dock-item><dock-item app="software"></dock-item><dock-item app="help"></dock-item>
      <hr><dock-item app="trash"></dock-item><dock-item class="apps" app="grid"></dock-item>`;
  }
}

class TitleBar extends UiElement {
  static get styles() {
    return `
      :host { display: grid; grid-template-columns: 1fr auto 1fr; align-items: center; height: 37px; box-sizing: border-box; background: #ebebeb; border-top: 1px solid #f9f9f9; border-bottom: 1px solid #b9b9b9; font-weight: 700; }
      .buttons { display: flex; justify-content: flex-end; gap: 12px; padding-right: 7px; }
      .buttons svg { display: block; background: #d9d9d9; border-radius: 50%; }`;
  }
  markup() {
    return `<span></span><fit-text w="286">answer_sheet1.docx - LibreOffice Writer</fit-text>
      <div class="buttons">
        <svg width="22" height="22"><path d="M7 13.500h8" stroke="#333"/></svg>
        <svg width="22" height="22" fill="none"><path d="M10 7.500h4.500V12" stroke="#8d8d8d"/><path d="M7.500 9.500h5v5h-5z" stroke="#333"/></svg>
        <svg width="22" height="22"><path d="M7.500 7.500l7 7m0-7l-7 7" stroke="#333" stroke-width="1.500"/></svg>
      </div>`;
  }
}

class MenuBar extends UiElement {
  static get styles() {
    return `:host { display: flex; align-items: center; gap: 16px; height: 25px; box-sizing: border-box; padding: 2px 0 0 8px; border-bottom: 1px solid #dcdcdc; }`;
  }
  markup() {
    return [["File", 24], ["Edit", 27], ["View", 33], ["Insert", 39], ["Format", 50], ["Styles", 40], ["Table", 37], ["Form", 35], ["Tools", 37], ["Window", 55], ["Help", 30]]
      .map(([label, w]) => `<fit-text w="${w}">${label}</fit-text>`).join("");
  }
}

class ToolBars extends UiElement {
  static get styles() {
    return `
      :host { display: block; height: 78px; }
      div { display: flex; align-items: center; }
      .standard { height: 38px; padding-left: 3px; }
      .formatting { height: 40px; padding-left: 4px; }
      .formatting tool-icon:not([w]) { --nudge: 1px; }
      .gap { width: 8px; }`;
  }
  markup() {
    // strings are icon names, [name, width] overrides the cell, numbers are carets, [lead, width] pairs are separators
    const draw = items => items.map(item => {
      if (typeof item === "string" && item[0] === "<") return item;
      if (typeof item === "string") return `<tool-icon name="${item}"></tool-icon>`;
      if (typeof item === "number") return `<tool-caret w="${Math.abs(item)}" ${item < 0 ? "off" : ""}></tool-caret>`;
      const [first, w] = item;
      if (typeof first === "number") return `<tool-sep lead="${first}" w="${w}"></tool-sep>`;
      return `<tool-icon name="${first}" w="${w}"></tool-icon>`;
    }).join("");
    return `
      <div class="standard">${draw([
        ["new", 32], 12, ["open", 32], 13, ["save", 31], 13, [4, 9], "pdf", "print", "preview", [3, 7],
        "cut", "copy", ["paste", 32], -12, [4, 8], "clone", [4, 7], ["undo", 32], -13, ["redo", 31], -13, [4, 9],
        "find", "spell", "pilcrow", [3, 6], ["table", 32], 14, "image", "chart", "textbox", [3, 6],
        "pagebreak", ["field", 32], 12, "omega", 12, [4, 9], "link", "footnote", "endnote", "bookmark", "crossref", [3, 8],
        "comment", "track", [3, 8], ["line", 31], "shape", 12, "brush"])}</div>
      <div class="formatting">${draw([
        `<combo-field w="202"><fit-text w="65">Text Body</fit-text></combo-field>`, "styleUpdate", "styleNew", [4, 8],
        `<combo-field w="221"><fit-text w="123">Times New Roman</fit-text></combo-field><span class="gap"></span>`,
        `<combo-field w="101"><fit-text w="34">14 pt</fit-text></combo-field>`, [4, 8],
        `<tool-icon name="bold" active></tool-icon>`, "italic", ["underline", 31], 13, "strike", [4, 9],
        "superscript", "subscript", [3, 8], "clear", [3, 6], ["fontcolor", 32], 13, ["highlight", 31], 13, [4, 8],
        "left", `<tool-icon name="center" active></tool-icon>`, "right", "justify", [4, 7],
        ["bullets", 32], 13, ["numbering", 31], 13, `<tool-icon name="nolist" active></tool-icon>`, [4, 8],
        "indent", "outdent", [4, 8], ["spacing", 31], 13, "paraInc", "paraDec"])}</div>`;
  }
}

class TextRuler extends UiElement {
  static get styles() {
    return `:host { display: block; height: 24px; } svg { display: block; } text { font: 10px/1 "Noto Sans", sans-serif; fill: #a0a0a0; text-anchor: middle; }`;
  }
  markup() {
    const zero = 265.5;
    const cm = 72.53;
    let marks = "";
    for (let i = -18; i < 191; i++) {
      const x = Math.round(zero + i * cm / 10 - .5);
      if (i === 0) continue;
      if (i % 10 === 0) {
        marks += `<path d="M${x}.5 5v1M${x}.5 18v1" stroke="#b5b5b5"/><text x="${x}" y="14">${Math.abs(i / 10)}</text>`;
      } else if (i % 5 === 0) {
        marks += `<path d="M${x}.5 9v3" stroke="#999"/>`;
      } else {
        marks += `<path d="M${x} 10.500h1" stroke="#a5a5a5"/>`;
      }
    }
    for (let k = 1; k < 24; k++) {
      const x = Math.round(zero - .5 + k * 53.77);
      marks += `<path d="M${x - 2} 18.500h5M${x}.5 16v3" stroke="#8c8c8c"/>`;
    }
    return `<svg width="1791" height="24" fill="none">
      <path d="M9 9v5h6" stroke="#8c8c8c" stroke-width="2"/>
      <path d="M266 4h1246v15H266z" fill="#fff"/>
      <path d="M127.500 4.500h138v14h-138zM1512.500 4.500h138v14h-138z" stroke="#b1b1b1"/>${marks}
      <path d="M261.500 3.500h8v3l-4 4.500-4-4.500zM265.500 11l4 4v4.500h-8V15z" fill="#fff" stroke="#808080"/>
      <path d="M1512.500 11l4 4v4.500h-8V15z" fill="#fff" stroke="#808080"/>
    </svg>`;
  }
}

class DocumentPage extends UiElement {
  static get styles() {
    return `
      :host { display: block; flex: none; box-sizing: border-box; width: 1527px; margin-left: 126px; padding: 0 0 0 139px; background: #fff;
        border: solid #979797; border-width: 0 1px; box-shadow: 0 8px 4px #0004; color: #000;
        font: italic 27px/55.300px "Liberation Serif", "Noto Sans CJK SC", serif; }
      ::slotted(p) { margin: 0; white-space: pre; }`;
  }
  markup() { return `<slot></slot>`; }
}

class SideBar extends UiElement {
  static get styles() {
    return `
      :host { display: flex; flex-direction: column; align-items: center; gap: 8px; width: 59px; box-sizing: border-box; border-left: 1px solid #b9b9b9; padding: 2px 0 0 2px; position: relative; }
      tool-icon[name="menu"] { margin-bottom: 3px; }
      .handle { position: absolute; left: -1px; top: 409px; width: 7px; height: 73px; background: #9c9c9c; display: flex; align-items: center; justify-content: center; }`;
  }
  markup() {
    return ["menu", "properties", "styles", "gallery", "navigator", "page", "inspector"]
      .map(name => `<tool-icon name="${name}" w="36" ${name === "properties" ? "active" : ""}></tool-icon>`).join("")
      + `<div class="handle"><svg width="5" height="7"><path d="M0 0l5 3.500L0 7z" fill="#fff"/></svg></div>`;
  }
}

class StatusBar extends UiElement {
  static get styles() {
    return `
      :host { display: flex; align-items: center; height: 21px; box-sizing: border-box; border-top: 1px solid #b4b4b4; background: #fafafa; font-size: 12.500px; line-height: 20px; }
      div { display: flex; flex: none; align-items: center; height: 15px; box-sizing: border-box; border-right: 1px solid #dcdcdc; padding-left: 8px; }
      div:last-child { border: 0; }
      fit-text { padding-top: 2px; }
      svg { display: block; }`;
  }
  markup() {
    const sheet = (x, color) => `<path d="M${x}.5 2.500q0-1 1-1h3l2.500 2.500v5.500q0 1-1 1h-4.500q-1 0-1-1z" stroke="${color}"/><path d="M${x + 4}.5 1.500v2.500h2.500" stroke="${color}"/>`;
    return `
      <div style="width:31px;padding-left:12px"><svg width="10" height="12"><path d="M3.500.5h3v5H9L5 9.500 1 5.500h2.500z" fill="#a3d63a" stroke="#4f6f22"/><path d="M1 11h8" stroke="#555"/></svg></div>
      <div style="width:261px"><fit-text w="62">Page 3 of 3</fit-text></div>
      <div style="width:362px"><fit-text w="155">323 words, 1,405 characters</fit-text></div>
      <div style="width:309px"><fit-text w="101">Default Page Style</fit-text></div>
      <div style="width:278px;padding-left:104px"><fit-text w="72">English (USA)</fit-text></div>
      <div style="width:68px"></div>
      <div style="width:29px;padding-left:6px"><svg width="18" height="12" fill="none"><path d="M.7 3.500h7v5h-7z" stroke="#e95420" stroke-width="1.400"/><path d="M12 1.500h5M12 10.500h5M14.500 1.500v9" stroke="#333" stroke-width="1.200"/></svg></div>
      <div style="width:28px"></div>
      <div style="width:217px"></div>
      <div style="width:76px;padding-left:12px"><svg width="58" height="12" fill="none">${sheet(1, "#444")}${sheet(15, "#b5b5b5")}${sheet(25, "#b5b5b5")}${sheet(39, "#b5b5b5")}${sheet(47, "#b5b5b5")}</svg></div>
      <div style="width:143px;padding-left:10px"><svg width="126" height="15" fill="none" stroke="#666"><path d="M0 8h8M117 8h8M121 4v8" stroke-width="2"/><path d="M14 8h97" stroke="#999" stroke-width="1.500"/><path d="M46.500 5v6M62.500 5v6" stroke="#888"/><circle cx="70" cy="8" r="3.500" fill="#fff"/></svg></div>
      <div style="width:48px"><fit-text w="31">192%</fit-text></div>`;
  }
}

class WriterWindow extends UiElement {
  static get styles() {
    return `
      :host { display: flex; flex-direction: column; background: #fafafa; min-width: 0; }
      .body { flex: 1; display: flex; min-height: 0; }
      .editor { flex: 1; min-width: 0; display: flex; flex-direction: column; }
      .canvas { flex: 1; display: flex; overflow: hidden; min-height: 0; }
      .track { margin-left: auto; width: 9px; display: flex; flex-direction: column; }
      .thumb { width: 6px; height: 110px; margin-top: 640px; border-radius: 3px; background: #8a8a87; }
      .answer { padding-top: 3px; }
      .bracket { font-style: normal; }`;
  }
  markup() {
    return `
      <title-bar></title-bar><menu-bar></menu-bar><tool-bars></tool-bars>
      <div class="body">
        <div class="editor">
          <text-ruler></text-ruler>
          <div class="canvas">
            <document-page>
              <p>A. wrote</p><p>B. has written</p><p>C. would write</p><p>D. had written</p>
              <p class="answer"><span class="bracket">【</span>Answer<span class="bracket">】</span>D</p>
            </document-page>
            <div class="track"><div class="thumb"></div></div>
          </div>
        </div>
        <side-bar></side-bar>
      </div>
      <status-bar></status-bar>`;
  }
}

class DesktopShell extends UiElement {
  static get styles() {
    return `
      :host { display: grid; grid-template: 27px 1053px / 70px 1850px; width: 1920px; height: 1080px; position: relative; overflow: hidden; }
      top-panel { grid-column: 1 / -1; }
      .tip { position: absolute; left: 70px; top: 321px; height: 31px; width: 148px; box-sizing: border-box; padding-left: 13px; border-radius: 16px; background: #202020; color: #eee; display: flex; align-items: center; box-shadow: inset 0 0 0 1px #343434; }
      .cursor { position: absolute; left: 38px; top: 340px; }`;
  }
  markup() {
    return `<top-panel></top-panel><app-dock></app-dock><writer-window></writer-window>
      <div class="tip"><fit-text w="122">LibreOffice Writer</fit-text></div>
      <svg class="cursor" width="19" height="26"><path d="M1.500 1.500v19l4.500-4 3.500 7.500 4-1.500-3.500-7.500h6z" fill="#2a2a2a" stroke="#fff" stroke-width="1.300"/></svg>`;
  }
}

customElements.define("fit-text", FitText);
customElements.define("tool-icon", ToolIcon);
customElements.define("tool-caret", ToolCaret);
customElements.define("tool-sep", ToolSep);
customElements.define("combo-field", ComboField);
customElements.define("top-panel", TopPanel);
customElements.define("dock-item", DockItem);
customElements.define("app-dock", AppDock);
customElements.define("title-bar", TitleBar);
customElements.define("menu-bar", MenuBar);
customElements.define("tool-bars", ToolBars);
customElements.define("text-ruler", TextRuler);
customElements.define("document-page", DocumentPage);
customElements.define("side-bar", SideBar);
customElements.define("status-bar", StatusBar);
customElements.define("writer-window", WriterWindow);
customElements.define("desktop-shell", DesktopShell);
</script>
</body>
</html>
